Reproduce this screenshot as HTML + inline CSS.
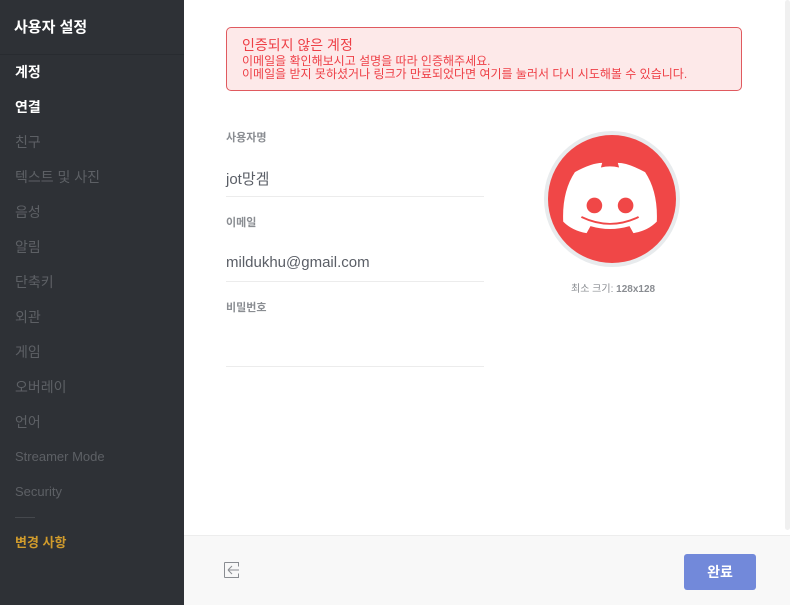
<!DOCTYPE html>
<html><head><meta charset="utf-8"><style>
*{margin:0;padding:0;box-sizing:border-box}
body{width:790px;height:605px;overflow:hidden;position:relative;background:#fff;font-family:"Liberation Sans","Noto Sans CJK KR",sans-serif}
#side{position:absolute;left:0;top:0;width:184px;height:605px;background:#2e3136}
#side .h{position:absolute;left:14px;top:16px;color:#fff;font-size:15px;font-weight:bold}
#side .sep{position:absolute;left:0;top:54px;width:184px;height:1px;background:#282b30}
.it{position:absolute;left:15px;font-size:14px;color:#5d6065}
.w{color:#fff;font-weight:bold}
#main{position:absolute;left:184px;top:0;width:606px;height:535px;background:#fff}
#sb{position:absolute;left:785px;top:0;width:5px;height:530px;background:#f0f0f0;border-radius:3px}
#warn{position:absolute;left:226px;top:27px;width:516px;height:64px;background:#fde9e9;border:1px solid #e05a5f;border-radius:5px;color:#ee3f46;padding:9px 0 0 15px;font-size:12px;line-height:13px}
#warn b{font-size:14px;font-weight:normal;display:block;margin-bottom:2px;line-height:16px}
.lab{position:absolute;left:226px;font-size:11px;font-weight:bold;color:#8a8d92}
.val{position:absolute;left:226px;font-size:15px;color:#5a5e66}
.line{position:absolute;left:226px;width:258px;height:1px;background:#ececec}
#foot{position:absolute;left:184px;top:535px;width:606px;height:70px;background:#f8f8f8;border-top:1px solid #ededed}
#btn{position:absolute;left:684px;top:554px;width:72px;height:36px;background:#7289da;border-radius:3px;color:#fff;font-weight:bold;font-size:14px;text-align:center;line-height:36px}
</style></head><body>
<div id="side">
<div class="h">사용자 설정</div><div class="sep"></div>
<div class="it w" style="top:62px">계정</div>
<div class="it w" style="top:97px">연결</div>
<div class="it" style="top:132px">친구</div>
<div class="it" style="top:167px">텍스트 및 사진</div>
<div class="it" style="top:202px">음성</div>
<div class="it" style="top:237px">알림</div>
<div class="it" style="top:272px">단축키</div>
<div class="it" style="top:307px">외관</div>
<div class="it" style="top:342px">게임</div>
<div class="it" style="top:377px">오버레이</div>
<div class="it" style="top:412px">언어</div>
<div class="it" style="top:449px;font-size:13px">Streamer Mode</div>
<div class="it" style="top:484px;font-size:13px">Security</div>
<div style="position:absolute;left:15px;top:517px;width:20px;height:1px;background:#45484d"></div>
<div class="it" style="top:532px;color:#d09b2c;font-weight:bold;font-size:13px">변경 사항</div>
</div>
<div id="main"></div><div id="sb"></div>
<div id="warn"><b>인증되지 않은 계정</b>이메일을 확인해보시고 설명을 따라 인증해주세요.<br>이메일을 받지 못하셨거나 링크가 만료되었다면 여기를 눌러서 다시 시도해볼 수 있습니다.</div>
<div class="lab" style="top:129px">사용자명</div>
<div class="val" style="top:168px">jot망겜</div>
<div class="line" style="top:196px"></div>
<div class="lab" style="top:214px">이메일</div>
<div class="val" style="top:254px">mildukhu@gmail.com</div>
<div class="line" style="top:281px"></div>
<div class="lab" style="top:299px">비밀번호</div>
<div class="line" style="top:366px"></div>
<svg style="position:absolute;left:543px;top:130px" width="138" height="138" viewBox="0 0 138 138">
<circle cx="69" cy="69" r="68" fill="#e8ebed"/><circle cx="69" cy="69" r="64" fill="#f04747"/>
<g transform="translate(67 68) scale(1.3 1.15) translate(-69 -67.5)">
<path d="M42 45 Q55 37 63 37 L62 41 Q69 39 76 41 L75 37 Q83 37 96 45 Q106 62 105 88 Q98 96 87 98 L84 92 Q69 97 54 92 L51 98 Q40 96 33 88 Q32 62 42 45Z" fill="#fff"/>
<ellipse cx="57" cy="74" rx="6" ry="6.8" fill="#f04747"/><ellipse cx="81" cy="74" rx="6" ry="6.8" fill="#f04747"/>
<path d="M47 84 Q69 96 91 84" stroke="#f04747" stroke-width="1.6" fill="none"/>
</g>
</svg>
<div style="position:absolute;left:571px;top:280px;font-size:10px;color:#8a8d92">최소 크기: <b>128x128</b></div>
<div id="foot"></div>
<svg style="position:absolute;left:223px;top:561px" width="18" height="18" viewBox="0 0 18 18" fill="none" stroke="#8a8d92" stroke-width="1"><path d="M1.5 1.5v15M1.5 1.5h14v4M1.5 16.5h14v-4M5 9h11M5 9l4-4M5 9l4 4"/></svg>
<div id="btn">완료</div>
</body></html>
